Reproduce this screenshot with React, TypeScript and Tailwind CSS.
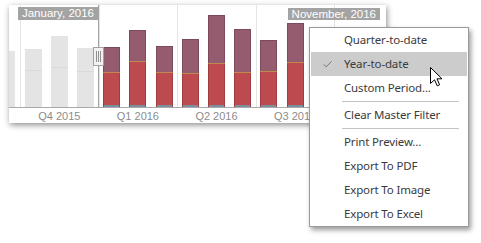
import { Check } from 'lucide-react';

type Bar = { total: number; red: number };

// bar heights in px, measured from the axis
const quarters: { label: string; gray?: boolean; bars: Bar[] }[] = [
  { label: 'Q4 2015', gray: true, bars: [{ total: 58, red: 37 }, { total: 71, red: 40 }, { total: 59, red: 36 }] },
  { label: 'Q1 2016', bars: [{ total: 60, red: 35 }, { total: 77, red: 46 }, { total: 61, red: 35 }] },
  { label: 'Q2 2016', bars: [{ total: 68, red: 34 }, { total: 92, red: 44 }, { total: 78, red: 35 }] },
  { label: 'Q3 2016', bars: [{ total: 67, red: 36 }, { total: 84, red: 45 }, { total: 70, red: 38 }] },
  { label: '', bars: [{ total: 60, red: 33 }, { total: 55, red: 30 }, { total: 0, red: 0 }] },
];

function ColorBar({ bar }: { bar: Bar }) {
  if (!bar.total) return null;
  return (
    <div className="w-[17px] flex flex-col" style={{ height: bar.total }}>
      <div className="flex-1 bg-[#955c70] border border-b-0 border-[#7d4a5d]" />
      <div className="h-px bg-[#c0884a]" />
      <div className="flex flex-col border-x border-[#a03d42]" style={{ height: bar.red - 1 }}>
        <div className="flex-1 bg-[#bd4a4e]" />
        <div className="h-[2px] bg-[#7a8e9c]" />
      </div>
    </div>
  );
}

function GrayBar({ bar }: { bar: Bar }) {
  return (
    <div className="w-[17px] flex flex-col bg-[#e4e4e4]" style={{ height: bar.total }}>
      <div className="flex-1" />
      <div className="border-t border-[#dadada]" style={{ height: bar.red }} />
    </div>
  );
}

const menu: (string | null)[] = [
  'Quarter-to-date',
  'Year-to-date',
  'Custom Period...',
  null,
  'Clear Master Filter',
  null,
  'Print Preview...',
  'Export To PDF',
  'Export To Image',
  'Export To Excel',
];

export default function App() {
  return (
    <div className="relative w-[481px] h-[243px] bg-white overflow-hidden font-['Liberation_Sans',Arial,sans-serif]">
      <div className="pl-[9px] pt-[5px]">
        {/* range selector panel */}
        <div className="relative w-[377px] h-[118px] bg-white overflow-hidden shadow-[1px_2px_6px_rgba(0,0,0,0.45)]">
          <div className="flex h-[103px] border-b border-[#a9a9a9]">
            <div className="w-[11px] shrink-0 flex items-end">
              <div className="w-[6px] h-[56px] bg-[#e4e4e4]" />
            </div>
            {quarters.map((q, qi) => (
              <div key={qi} className="w-[78.6px] shrink-0 flex shadow-[inset_1px_0_0_#e4e4e4]">
                {q.bars.map((b, i) => (
                  <div key={i} className="flex-1 flex items-end justify-center">
                    {q.gray ? <GrayBar bar={b} /> : <ColorBar bar={b} />}
                  </div>
                ))}
              </div>
            ))}
          </div>
          <div className="flex h-[15px] pt-px text-[11px] leading-[15px] text-[#8c8c8c]">
            <div className="w-[11px] shrink-0" />
            {quarters.map((q, qi) => (
              <div key={qi} className="w-[78.6px] shrink-0 text-center whitespace-nowrap">
                {q.label}
              </div>
            ))}
          </div>

          {/* selection edge, handle and date captions */}
          <div className="absolute left-[89px] top-0 h-[103px] w-px bg-[#a3a3a3]" />
          <div className="absolute left-[84px] top-[42px] w-[11px] h-[19px] bg-[#f2f2f2] border border-[#a3a3a3] flex items-center justify-center gap-px">
            <div className="w-px h-[11px] bg-[#8f8f8f]" />
            <div className="w-px h-[11px] bg-[#8f8f8f]" />
            <div className="w-px h-[11px] bg-[#8f8f8f]" />
          </div>
          <div className="absolute right-[288px] top-[2px] h-[13px] px-[4px] bg-[#a3a3a3] text-white text-[11.5px] leading-[13px] whitespace-nowrap">
            January, 2016
          </div>
          <div className="absolute right-[6px] top-[3px] h-[12px] px-[4px] bg-[#a3a3a3] text-white text-[11.5px] leading-[12px] whitespace-nowrap">
            November, 2016
          </div>
        </div>
      </div>

      {/* context menu */}
      <div className="absolute left-[309px] top-[27px] w-[160px] bg-white border border-[#9a9a9a] px-px shadow-[2px_3px_5px_rgba(0,0,0,0.4)] font-['Noto_Sans',sans-serif] text-[11.5px] tracking-[-0.15px] text-[#3b3b3b]">
        {menu.map((item, i) =>
          item === null ? (
            <div key={i} className="h-[3px] flex items-center pl-[31px] pr-[8px]">
              <div className="h-px w-full bg-[#c4c4c4]" />
            </div>
          ) : (
            <div
              key={i}
              className={`relative h-[24px] flex items-center pl-[33px] whitespace-nowrap ${item === 'Year-to-date' ? 'bg-[#cccccc]' : ''}`}
            >
              {item === 'Year-to-date' && (
                <Check className="absolute left-[11px] top-[7px] w-[11px] h-[11px] text-[#6b6b6b]" strokeWidth={2} />
              )}
              {item}
            </div>
          )
        )}
      </div>

      {/* mouse pointer */}
      <svg className="absolute left-[430px] top-[67px]" width="13" height="20" viewBox="0 0 13 20">
        <path d="M0.5 0.5 L0.5 16.5 L4.5 12.8 L7.2 18.8 L9.6 17.8 L7 11.8 L12 11.8 Z" fill="#fff" stroke="#000" strokeWidth="1" strokeLinejoin="round" />
      </svg>
    </div>
  );
}
